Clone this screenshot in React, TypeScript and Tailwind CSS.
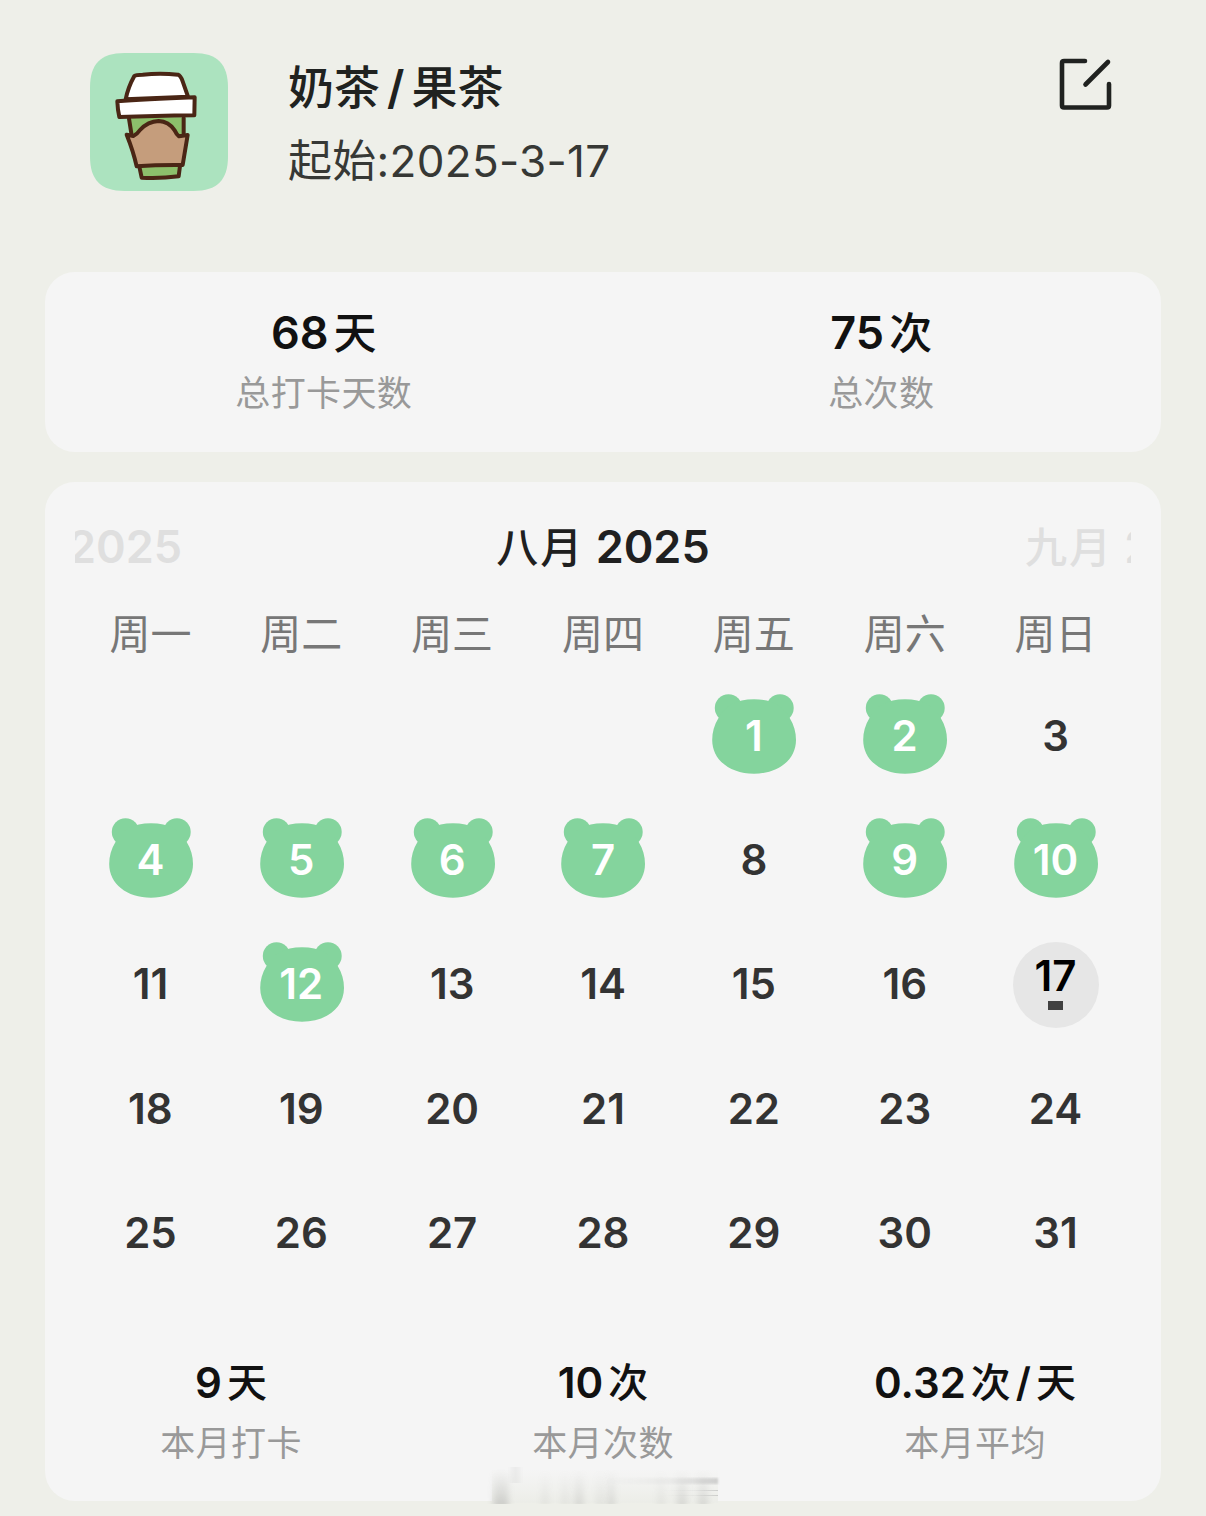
import clsx from "clsx";

const WEEKDAYS = ["周一", "周二", "周三", "周四", "周五", "周六", "周日"];
const CHECKED_DAYS = [1, 2, 4, 5, 6, 7, 9, 10, 12];
const TODAY = 17;
const DAYS_IN_MONTH = 31;

const CupIcon = () => (
  <svg
    viewBox="30 39 414 414"
    className="size-[138px]"
    stroke="#4a2615"
    strokeWidth="12"
    strokeLinejoin="round"
    strokeLinecap="round"
  >
    <path
      d="M30 143C30 72 62 39 133 39H341C412 39 444 72 444 143V349C444 420 412 453 341 453H133C62 453 30 420 30 349Z"
      fill="#ace3bf"
      stroke="none"
    />
    <path d="M147 232L154 284L184 412Q240 416 297 410L301 376L311 284V232Z" fill="#8cc06b" stroke="none" />
    <path d="M147 236L154 280M311 234V280" fill="none" />
    <path d="M178 380L185 413Q240 416 296 409L300 378" fill="none" />
    <path
      d="M140 284L160 288Q172 282 180 270Q204 244 236 243Q266 244 284 271Q290 284 297 289L323 285L308 375Q236 374 170 379Q160 334 140 284Z"
      fill="#c59d7c"
    />
    <path
      d="M137 178Q144 142 163 108Q168 104 188 104Q240 99 294 104Q302 107 308 124L324 170Z"
      fill="#fff"
    />
    <path d="M112 184Q190 178 344 172L343 226Q220 228 118 231Q113 210 112 184Z" fill="#fff" />
  </svg>
);

const EditIcon = () => (
  <svg
    viewBox="0 0 54 54"
    className="size-[54px]"
    fill="none"
    stroke="#202220"
    strokeWidth="4.6"
    strokeLinecap="round"
    strokeLinejoin="round"
  >
    <path d="M27 4H6Q4 4 4 6V48.5Q4 50.5 6 50.5H49Q51 50.5 51 48.5V27" />
    <path d="M27.5 27.5L50 5" />
  </svg>
);

const BearShape = () => (
  <svg
    viewBox="0 0 84 80"
    className="absolute top-[0.5px] left-[0.5px] h-20 w-[84px]"
    fill="#84d49d"
  >
    <circle cx="16.5" cy="14" r="13.7" />
    <circle cx="68" cy="14" r="13.7" />
    <path d="M42 5.3C60 5.3 71 12 77.7 24C82 31 84 38 84 46C84 66 66 79.7 42 79.7C18 79.7 0.2 66 0.2 46C0.2 38 2.2 31 6.5 24C13 12 24 5.3 42 5.3Z" />
  </svg>
);

type StatProps = {
  value: string;
  unit: string;
  label: string;
  small?: boolean;
};

const Stat = ({ value, unit, label, small }: StatProps) => (
  <div className="flex flex-1 flex-col items-center">
    <div
      className={clsx(
        "flex h-[60px] items-center gap-[5px] font-semibold text-[#111]",
        small ? "text-[42px]" : "text-[45px]",
      )}
    >
      <span className="pt-px">{value}</span>
      {unit.split("").map((char) => (
        <span
          key={char}
          className={clsx(
            "pt-[3px]",
            char === "/" ? "font-semibold" : "font-medium",
            small ? "text-[40px]" : "text-[43px]",
          )}
        >
          {char}
        </span>
      ))}
    </div>
    <p className="flex h-[60px] items-center pt-[3px] text-[35px] tracking-[0.4px] text-[#999]">
      {label}
    </p>
  </div>
);

const DayCell = ({ day }: { day: number }) => {
  if (day === TODAY) {
    return (
      <div className="mt-[2px] flex size-[86px] flex-col items-center rounded-full bg-[#e6e6e6] pt-[9px] text-black">
        <span className="h-[50px] leading-[50px]">{day}</span>
        <span className="h-[9px] w-[15px] bg-[#404040]" />
      </div>
    );
  }

  if (CHECKED_DAYS.includes(day)) {
    return (
      <div className="relative mb-[6px] flex h-20 w-[84px] items-center justify-center text-white">
        <BearShape />
        <span className="relative pt-[6px] leading-none">{day}</span>
      </div>
    );
  }

  return <span className="leading-[86px]">{day}</span>;
};

const SMEARS = [
  { left: 14, width: 30, opacity: "opacity-30" },
  { left: 66, width: 14, opacity: "opacity-10" },
  { left: 86, width: 14, opacity: "opacity-10" },
  { left: 98, width: 18, opacity: "opacity-20" },
  { left: 120, width: 16, opacity: "opacity-10" },
  { left: 131, width: 16, opacity: "opacity-20" },
  { left: 182, width: 14, opacity: "opacity-10" },
  { left: 200, width: 20, opacity: "opacity-20" },
  { left: 221, width: 20, opacity: "opacity-20" },
];

const CaptionSmear = () => (
  <svg viewBox="0 0 260 42" className="absolute -bottom-[4px] left-[427px] h-[42px] w-[260px]">
    <defs>
      <linearGradient id="smear-fade" x1="0" y1="0" x2="0" y2="1">
        <stop offset="0" stopColor="#999" stopOpacity="0" />
        <stop offset="1" stopColor="#888" />
      </linearGradient>
      <linearGradient id="smear-bar" x1="0" y1="0" x2="1" y2="0">
        <stop offset="0" stopColor="#bbb" stopOpacity="0" />
        <stop offset="0.6" stopColor="#bbb" stopOpacity="0.15" />
        <stop offset="1" stopColor="#aaa" stopOpacity="0.5" />
      </linearGradient>
      <linearGradient id="smear-base" x1="0" y1="0" x2="0" y2="1">
        <stop offset="0" stopColor="#eeefea" stopOpacity="0" />
        <stop offset="1" stopColor="#ecede8" />
      </linearGradient>
      <filter id="smear-blur" x="-1" width="3" y="0" height="1">
        <feGaussianBlur stdDeviation="3 0" />
      </filter>
      <filter id="smear-soften">
        <feGaussianBlur stdDeviation="0.8" />
      </filter>
    </defs>
    <rect x="20" y="6" width="226" height="34" fill="url(#smear-base)" />
    {SMEARS.map(({ left, width, opacity }) => (
      <rect
        key={left}
        x={left + width / 4}
        y="6"
        width={width / 2}
        height="35"
        fill="url(#smear-fade)"
        filter="url(#smear-blur)"
        className={opacity}
      />
    ))}
    <rect x="41" y="4" width="5" height="16" fill="#bbb" filter="url(#smear-blur)" className="opacity-30" />
    <rect x="130" y="15" width="116" height="6" fill="url(#smear-bar)" filter="url(#smear-soften)" />
    <rect x="190" y="27" width="56" height="1" fill="url(#smear-bar)" />
    <rect x="190" y="32" width="56" height="1" fill="url(#smear-bar)" />
  </svg>
);

export default function App() {
  const days = Array.from({ length: DAYS_IN_MONTH }, (_, i) => i + 1);

  return (
    <div className="h-[1516px] w-[1206px] overflow-hidden bg-[#eeefe9] px-[45px] pt-[53px] font-[Inter,'Noto_Sans_CJK_SC',sans-serif]">
      <header className="flex h-[219px] items-start pr-[49px] pl-[45px]">
        <CupIcon />
        <div className="ml-[60px] flex-1">
          <h1 className="flex h-[68px] items-center gap-[7px] text-[46px] font-medium text-[#202220]">
            <span>奶茶</span>
            <span className="pt-px font-semibold">/</span>
            <span>果茶</span>
          </h1>
          <p className="flex h-20 items-center text-[44px] tracking-[0.3px] text-[#363835]">
            <span>起始:2025-3-17</span>
          </p>
        </div>
        <button type="button" aria-label="编辑" className="mt-1">
          <EditIcon />
        </button>
      </header>

      <section className="flex h-[180px] rounded-[30px] bg-[#f5f5f5] pt-[30px] pr-px">
        <Stat value="68" unit="天" label="总打卡天数" />
        <Stat value="75" unit="次" label="总次数" />
      </section>

      <section className="relative mt-[30px] h-[1019px] rounded-[30px] bg-[#f5f5f5] px-[30px] pt-[30px]">
        <div className="flex h-[68px] items-center justify-between overflow-hidden pt-px text-[45px] font-semibold text-[#dfdfdf]">
          <div className="flex w-[106px] justify-end overflow-hidden whitespace-nowrap">
            <span className="-mr-px">2025</span>
          </div>
          <div className="text-[#202020]">
            <span className="text-[42px] font-medium tracking-[2px]">八月</span> 2025
          </div>
          <div className="w-[106px] overflow-hidden whitespace-nowrap">
            <span className="text-[42px] font-medium tracking-[2px]">九月</span> 2025
          </div>
        </div>

        <div className="mt-[24px] grid h-[60px] grid-cols-7 items-center text-center text-[41px] text-[#777]">
          {WEEKDAYS.map((weekday) => (
            <span key={weekday}>{weekday}</span>
          ))}
        </div>

        <div className="mt-[10px] grid auto-rows-[124.2px] grid-cols-7 text-center text-[42px] font-semibold text-[#333]">
          {days.map((day) => (
            <div
              key={day}
              className={clsx("flex items-center justify-center", day === 1 && "col-start-5")}
            >
              <DayCell day={day} />
            </div>
          ))}
        </div>

        <div className="-mx-[30px] mt-[57px] flex">
          <Stat small value="9" unit="天" label="本月打卡" />
          <Stat small value="10" unit="次" label="本月次数" />
          <Stat small value="0.32" unit="次/天" label="本月平均" />
        </div>

        <CaptionSmear />
      </section>
    </div>
  );
}
